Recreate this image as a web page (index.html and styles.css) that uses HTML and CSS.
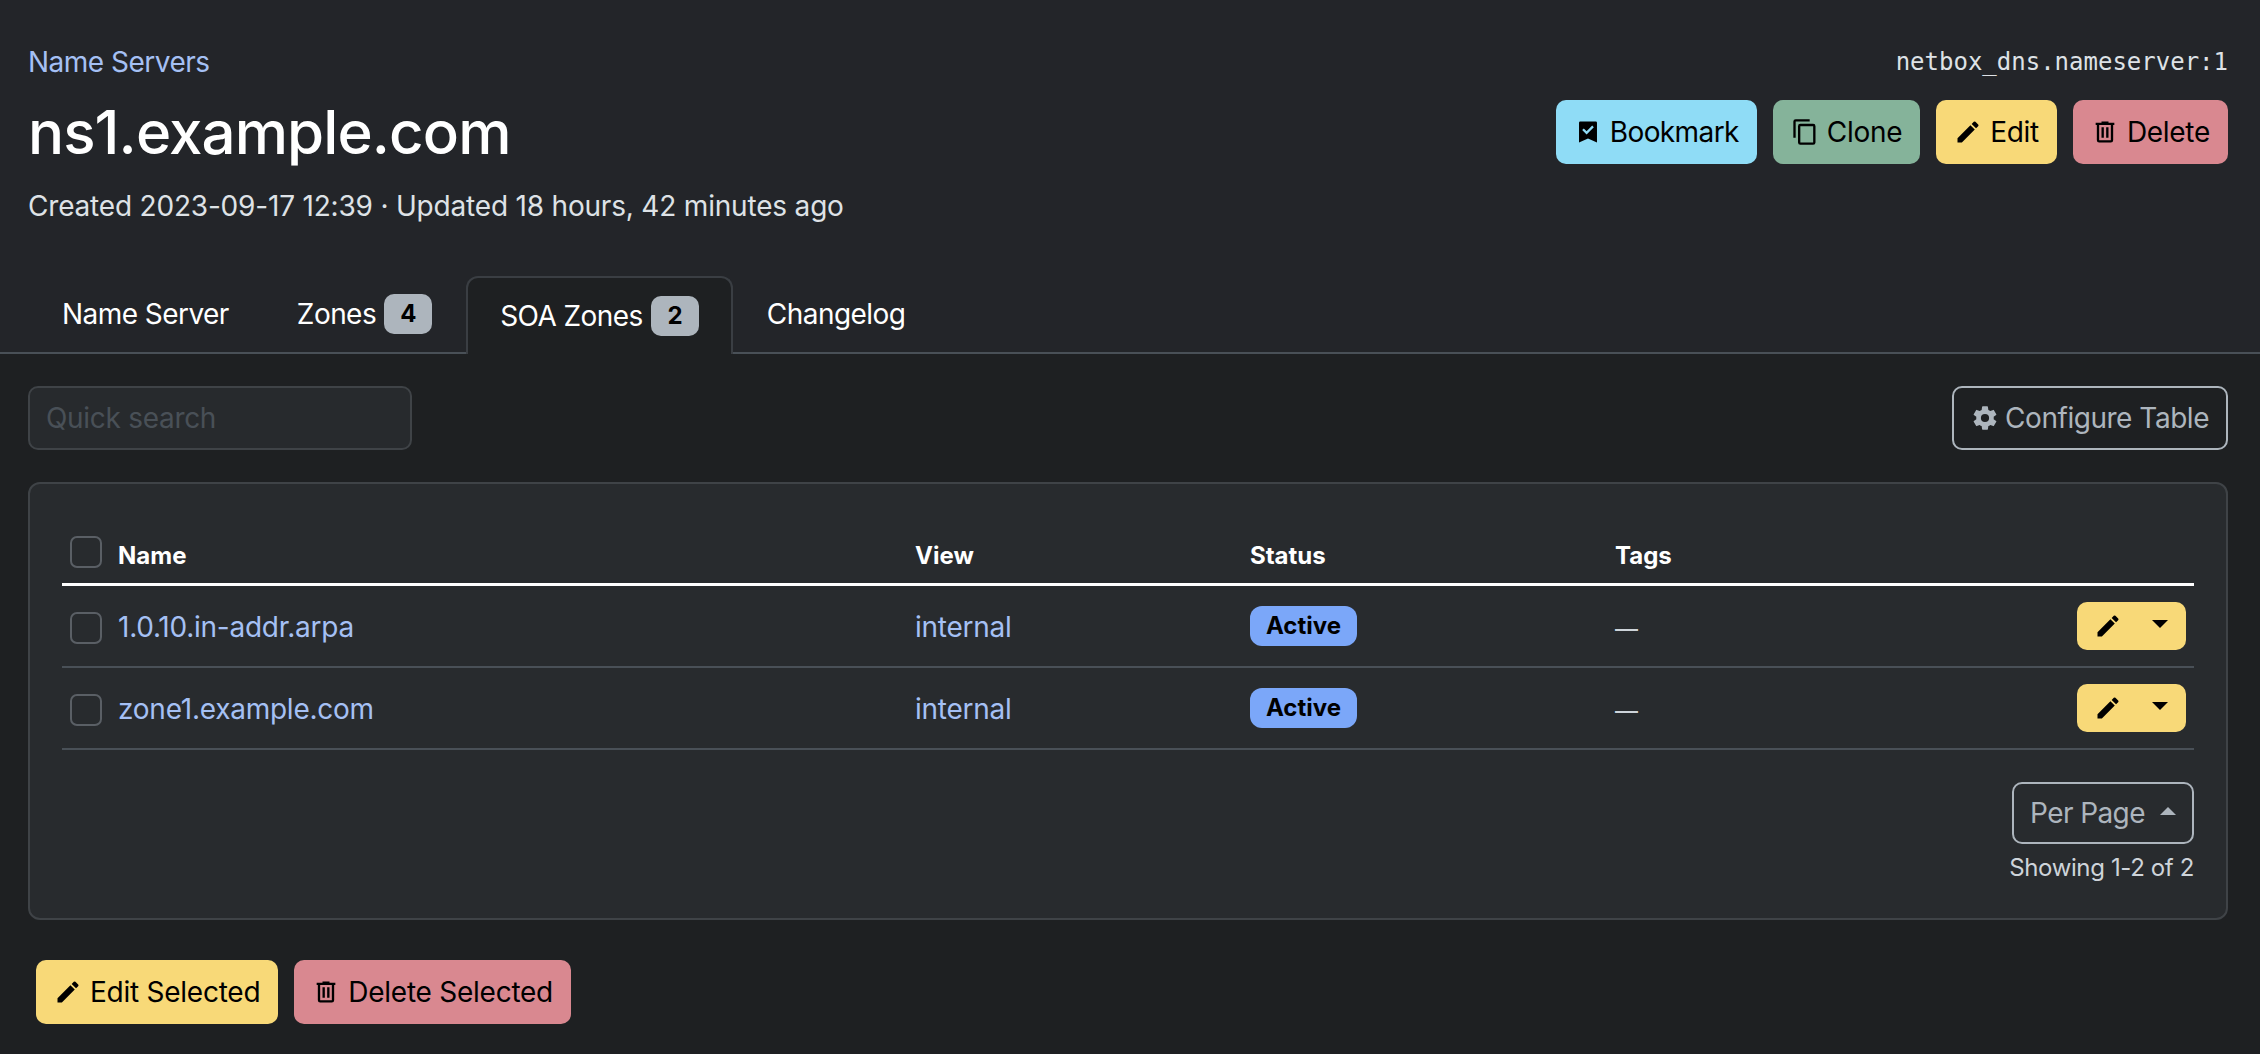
FILE: index.html
```html
<!DOCTYPE html>
<html lang="en">
<head>
    <meta charset="UTF-8">
    <title>ns1.example.com</title>
    <link rel="stylesheet" href="styles.css">
</head>
<body>
    <header class="page-header">
        <div class="header-top">
            <a class="breadcrumb" href="#">Name Servers</a>
            <code class="object-id">netbox_dns.nameserver:1</code>
        </div>
        <div class="title-row">
            <h1>ns1.example.com</h1>
            <div class="actions">
                <button class="btn btn-cyan">
                    <svg class="icon" viewBox="0 0 24 24"><path fill-rule="evenodd" d="M5.3 3h13.4a1 1 0 0 1 1 1v17L12 17.6 4.3 21V4a1 1 0 0 1 1-1zM8.4 8.9 7 10.3l3.8 3.8 6.2-6.2-1.4-1.4-4.8 4.8z"/></svg>
                    Bookmark
                </button>
                <button class="btn btn-green">
                    <svg class="icon" viewBox="0 0 24 24"><path d="M16 1H4a2 2 0 0 0-2 2v14h2V3h12V1zm3 4H8a2 2 0 0 0-2 2v14a2 2 0 0 0 2 2h11a2 2 0 0 0 2-2V7a2 2 0 0 0-2-2zm0 16H8V7h11v14z"/></svg>
                    Clone
                </button>
                <button class="btn btn-yellow">
                    <svg class="icon" viewBox="0 0 24 24"><path d="M3 17.25V21h3.75L17.81 9.94l-3.75-3.75L3 17.25zM20.71 7.04a1 1 0 0 0 0-1.41l-2.34-2.34a1 1 0 0 0-1.41 0l-1.83 1.83 3.75 3.75 1.83-1.83z"/></svg>
                    Edit
                </button>
                <button class="btn btn-red">
                    <svg class="icon" viewBox="0 0 24 24"><path d="M9 3v1H4v2h1v13a2 2 0 0 0 2 2h10a2 2 0 0 0 2-2V6h1V4h-5V3H9zM7 6h10v13H7V6zm2 2v9h2V8H9zm4 0v9h2V8h-2z"/></svg>
                    Delete
                </button>
            </div>
        </div>
        <p class="meta">Created 2023-09-17 12:39 · Updated 18 hours, 42 minutes ago</p>
        <nav class="tabs">
            <a class="tab" href="#">Name Server</a>
            <a class="tab" href="#">Zones <span class="count">4</span></a>
            <a class="tab active" href="#">SOA Zones <span class="count">2</span></a>
            <a class="tab" href="#">Changelog</a>
        </nav>
    </header>

    <main class="content">
        <div class="toolbar">
            <input class="search" type="text" placeholder="Quick search">
            <button class="btn btn-outline">
                <svg class="icon" viewBox="0 0 24 24"><path d="M12 15.5a3.5 3.5 0 1 1 0-7 3.5 3.5 0 0 1 0 7zm7.43-2.53c.04-.32.07-.64.07-.97s-.03-.66-.07-1l2.11-1.63a.5.5 0 0 0 .12-.64l-2-3.46a.5.5 0 0 0-.61-.22l-2.49 1a7.3 7.3 0 0 0-1.69-.98l-.38-2.65A.49.49 0 0 0 14 2h-4a.49.49 0 0 0-.49.42l-.38 2.65c-.61.25-1.17.59-1.69.98l-2.49-1a.5.5 0 0 0-.61.22l-2 3.46a.49.49 0 0 0 .12.64L4.57 11c-.04.34-.07.67-.07 1s.03.65.07.97l-2.11 1.66a.49.49 0 0 0-.12.64l2 3.46c.12.22.39.3.61.22l2.49-1.01c.52.4 1.08.73 1.69.98l.38 2.65c.05.24.25.42.49.42h4c.24 0 .44-.18.49-.42l.38-2.65c.61-.25 1.17-.58 1.69-.98l2.49 1.01c.22.08.49 0 .61-.22l2-3.46a.49.49 0 0 0-.12-.64l-2.11-1.66z"/></svg>
                Configure Table
            </button>
        </div>

        <section class="card">
            <table class="zones">
                <thead>
                    <tr>
                        <th class="col-check"><span class="check"></span></th>
                        <th class="col-name">Name</th>
                        <th class="col-view">View</th>
                        <th class="col-status">Status</th>
                        <th>Tags</th>
                        <th></th>
                    </tr>
                </thead>
                <tbody>
                    <tr>
                        <td class="col-check"><span class="check"></span></td>
                        <td class="col-text"><a href="#">1.0.10.in-addr.arpa</a></td>
                        <td class="col-text"><a href="#">internal</a></td>
                        <td><span class="status">Active</span></td>
                        <td class="col-text"><span class="dash">—</span></td>
                        <td class="col-actions">
                            <span class="row-btn">
                                <svg class="icon" viewBox="0 0 24 24"><path d="M3 17.25V21h3.75L17.81 9.94l-3.75-3.75L3 17.25zM20.71 7.04a1 1 0 0 0 0-1.41l-2.34-2.34a1 1 0 0 0-1.41 0l-1.83 1.83 3.75 3.75 1.83-1.83z"/></svg>
                                <span class="caret-down"></span>
                            </span>
                        </td>
                    </tr>
                    <tr>
                        <td class="col-check"><span class="check"></span></td>
                        <td class="col-text"><a href="#">zone1.example.com</a></td>
                        <td class="col-text"><a href="#">internal</a></td>
                        <td><span class="status">Active</span></td>
                        <td class="col-text"><span class="dash">—</span></td>
                        <td class="col-actions">
                            <span class="row-btn">
                                <svg class="icon" viewBox="0 0 24 24"><path d="M3 17.25V21h3.75L17.81 9.94l-3.75-3.75L3 17.25zM20.71 7.04a1 1 0 0 0 0-1.41l-2.34-2.34a1 1 0 0 0-1.41 0l-1.83 1.83 3.75 3.75 1.83-1.83z"/></svg>
                                <span class="caret-down"></span>
                            </span>
                        </td>
                    </tr>
                </tbody>
            </table>
            <div class="pager">
                <button class="per-page">Per Page <span class="caret-up"></span></button>
                <small>Showing 1-2 of 2</small>
            </div>
        </section>

        <div class="bulk">
            <button class="btn btn-yellow">
                <svg class="icon" viewBox="0 0 24 24"><path d="M3 17.25V21h3.75L17.81 9.94l-3.75-3.75L3 17.25zM20.71 7.04a1 1 0 0 0 0-1.41l-2.34-2.34a1 1 0 0 0-1.41 0l-1.83 1.83 3.75 3.75 1.83-1.83z"/></svg>
                Edit Selected
            </button>
            <button class="btn btn-red">
                <svg class="icon" viewBox="0 0 24 24"><path d="M9 3v1H4v2h1v13a2 2 0 0 0 2 2h10a2 2 0 0 0 2-2V6h1V4h-5V3H9zM7 6h10v13H7V6zm2 2v9h2V8H9zm4 0v9h2V8h-2z"/></svg>
                Delete Selected
            </button>
        </div>
    </main>
</body>
</html>
```

FILE: styles.css
```css
* {
    margin: 0;
    padding: 0;
    box-sizing: border-box;
}

html, body {
    height: 100%;
}

body {
    font-family: Inter, "Noto Sans", sans-serif;
    font-size: 28px;
    color: #fff;
    background-color: #1e2022;
    overflow: hidden;
}

a {
    color: #a5c0f4;
    text-decoration: none;
}

/* header */
.page-header {
    display: flex;
    flex-direction: column;
    background-color: #232529;
    padding-top: 48px;
    border-bottom: 2px solid #495057;
    height: 354px;
}

.header-top {
    display: flex;
    justify-content: space-between;
    align-items: center;
    padding: 0 32px 0 28px;
    height: 28px;
}

.breadcrumb {
    font-size: 28px;
    letter-spacing: -0.5px;
}

.object-id {
    font-family: "DejaVu Sans Mono", monospace;
    font-size: 24px;
    color: #dee2e6;
}

.title-row {
    display: flex;
    justify-content: space-between;
    align-items: center;
    padding: 0 32px 0 28px;
    margin-top: 24px;
    height: 64px;
}

h1 {
    font-size: 60px;
    font-weight: 500;
    letter-spacing: -0.9px;
}

.actions {
    display: flex;
    gap: 16px;
}

.meta {
    padding-left: 28px;
    margin-top: 25px;
    font-size: 28px;
    letter-spacing: -0.19px;
    color: #dee2e6;
}

/* tabs */
.tabs {
    display: flex;
    align-items: flex-end;
    margin-top: auto;
    padding-left: 28px;
    letter-spacing: -0.55px;
}

.tab {
    display: flex;
    align-items: center;
    gap: 8px;
    height: 76px;
    padding: 0 34px;
    color: #fff;
}

.tab.active {
    height: 78px;
    margin-bottom: -2px;
    padding: 0 32px;
    background-color: #1e2022;
    border: 2px solid #3a3e43;
    border-bottom: none;
    border-radius: 12px 12px 0 0;
}

.count {
    display: inline-block;
    width: 48px;
    height: 40px;
    line-height: 40px;
    text-align: center;
    border-radius: 10px;
    font-size: 24px;
    font-weight: 700;
    color: #000;
    background-color: #adb5bd;
}

/* buttons */
.btn {
    display: inline-flex;
    align-items: center;
    gap: 8px;
    height: 64px;
    padding: 0 18px;
    border: none;
    border-radius: 10px;
    font-family: inherit;
    font-size: 28px;
    letter-spacing: -0.3px;
    color: #000;
    cursor: pointer;
}

.icon {
    width: 28px;
    height: 28px;
    fill: currentColor;
}

.btn-cyan { background-color: #8fdcf6; letter-spacing: -0.6px; }
.btn-green { background-color: #85b39a; }
.btn-yellow { background-color: #f8d978; }
.btn-red { background-color: #d98890; }

.btn-outline {
    gap: 6px;
    padding: 0 17px;
    background: none;
    border: 2px solid #adb5bd;
    letter-spacing: -0.47px;
    color: #adb5bd;
}

/* tab content */
.content {
    padding: 32px 32px 0 28px;
}

.toolbar {
    display: flex;
    justify-content: space-between;
    align-items: center;
}

.search {
    width: 384px;
    height: 64px;
    padding: 0 16px;
    background-color: #272a2d;
    border: 2px solid #3f4347;
    border-radius: 10px;
    font-family: inherit;
    font-size: 28px;
    letter-spacing: -0.3px;
    color: #fff;
}

.search::placeholder {
    color: #495057;
}

.card {
    margin-top: 32px;
    height: 438px;
    padding: 32px 32px 0 32px;
    background-color: #282b2e;
    border: 2px solid #3f4347;
    border-radius: 12px;
}

.zones {
    width: 100%;
    border-collapse: separate;
    border-spacing: 0;
    table-layout: fixed;
}

.zones th {
    height: 70px;
    padding-top: 11px;
    font-size: 24px;
    font-weight: 700;
    text-align: left;
    border-bottom: 3px solid #fff;
}

.zones th.col-check {
    padding-top: 5px;
}

.zones td {
    height: 82px;
    border-bottom: 2px solid #495057;
    color: #dee2e6;
    letter-spacing: -0.25px;
}

.zones td.col-check {
    padding-top: 4px;
}

.zones td.col-text {
    padding-top: 2px;
}

.col-check {
    width: 56px;
    padding-left: 8px;
}

.col-name {
    width: 797px;
}

.col-view {
    width: 335px;
}

.col-status {
    width: 365px;
}

.check {
    display: block;
    width: 32px;
    height: 32px;
    border: 2px solid #5a5f65;
    border-radius: 7px;
}

.status {
    display: inline-block;
    width: 107px;
    height: 40px;
    line-height: 40px;
    text-align: center;
    vertical-align: middle;
    border-radius: 12px;
    font-size: 24px;
    font-weight: 700;
    letter-spacing: 0;
    color: #000;
    background-color: #7ba7f9;
}

.dash {
    font-size: 23px;
    color: #ced4da;
}

.col-actions {
    text-align: right;
    padding-right: 8px;
}

.row-btn {
    display: inline-flex;
    align-items: center;
    justify-content: space-between;
    width: 109px;
    height: 48px;
    padding: 0 18px 0 17px;
    vertical-align: middle;
    border-radius: 10px;
    color: #000;
    background-color: #f8d978;
}

.caret-down, .caret-up {
    display: inline-block;
    border-left: 8px solid transparent;
    border-right: 8px solid transparent;
}

.caret-down {
    border-top: 8px solid #000;
    margin-bottom: 4px;
}

.caret-up {
    border-bottom: 8px solid #adb5bd;
    margin: 0 0 4px 15px;
}

.pager {
    display: flex;
    flex-direction: column;
    align-items: flex-end;
    margin-top: 32px;
}

.per-page {
    display: inline-flex;
    align-items: center;
    justify-content: center;
    width: 182px;
    height: 62px;
    background: none;
    border: 2px solid #adb5bd;
    border-radius: 10px;
    font-family: inherit;
    font-size: 28px;
    letter-spacing: -0.6px;
    color: #adb5bd;
}

.pager small {
    margin-top: 9px;
    font-size: 24px;
    letter-spacing: -0.37px;
    color: #ced4da;
}

.bulk {
    display: flex;
    gap: 16px;
    margin-top: 40px;
    padding-left: 8px;
}

.bulk .btn {
    letter-spacing: -0.25px;
}
```
